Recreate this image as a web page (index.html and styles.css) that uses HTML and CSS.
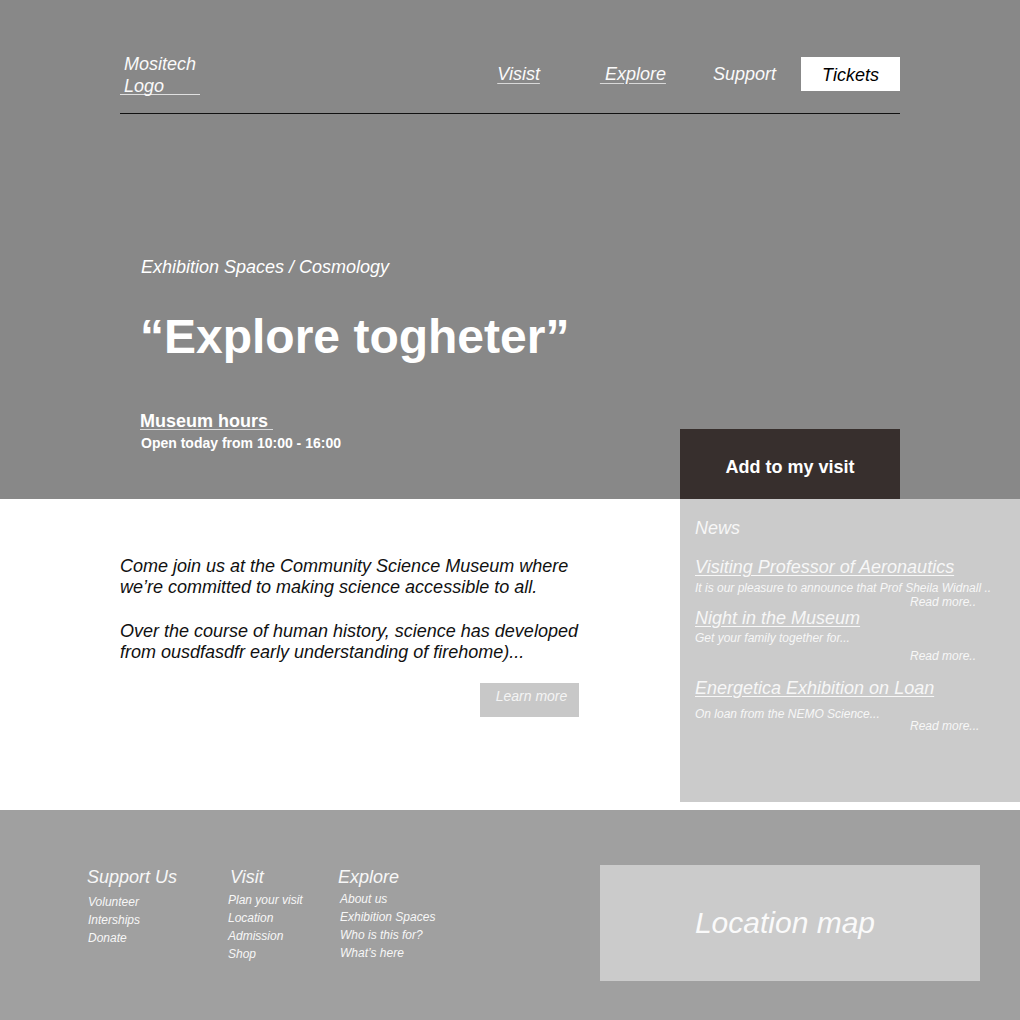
FILE: index.html
```html
<!DOCTYPE html>
<html lang="en">
<head>
<meta charset="utf-8">
<title>Mositech Museum</title>
<link rel="stylesheet" href="styles.css">
</head>
<body>
<section class="hero">
  <header class="topbar">
    <div class="logo">
      <div class="logo-line">Mositech</div>
      <div class="logo-line logo-under">Logo</div>
    </div>
    <nav class="nav">
      <a class="nav-link nav-visit">Visist</a>
      <a class="nav-link nav-explore">&nbsp;Explore</a>
      <a class="nav-link nav-support">Support</a>
      <a class="tickets">Tickets</a>
    </nav>
  </header>
  <div class="hero-body">
    <p class="crumb">Exhibition Spaces / Cosmology</p>
    <h1 class="title">“Explore togheter”</h1>
    <div class="hero-row">
      <div class="hours">
        <div class="hours-title">Museum hours&nbsp;</div>
        <div class="hours-text">Open today from 10:00 - 16:00</div>
      </div>
      <button class="add-visit">Add to my visit</button>
    </div>
  </div>
</section>

<main class="main">
  <div class="intro">
    <p class="intro-p">Come join us at the Community Science Museum where we’re committed to making science accessible to all.</p>
    <p class="intro-p">Over the course of human history, science has developed from ousdfasdfr early understanding of firehome)...</p>
    <div class="learn-row"><a class="learn-more">Learn more</a></div>
  </div>
  <aside class="news">
    <div class="news-head">News</div>
    <div class="news-item item-1">
      <a class="news-title">Visiting Professor of Aeronautics</a>
      <div class="news-desc">It is our pleasure to announce that Prof Sheila Widnall ..</div>
      <div class="news-more">Read more..</div>
    </div>
    <div class="news-item item-2">
      <a class="news-title">Night in the Museum</a>
      <div class="news-desc">Get your family together for...</div>
      <div class="news-more">Read more..</div>
    </div>
    <div class="news-item item-3">
      <a class="news-title">Energetica Exhibition on Loan</a>
      <div class="news-desc">On loan from the NEMO Science...</div>
      <div class="news-more">Read more...</div>
    </div>
  </aside>
</main>

<footer class="footer">
  <div class="fcol fcol-support">
    <div class="fhead">Support Us</div>
    <ul class="flist">
      <li>Volunteer</li>
      <li>Interships</li>
      <li>Donate</li>
    </ul>
  </div>
  <div class="fcol fcol-visit">
    <div class="fhead">Visit</div>
    <ul class="flist">
      <li>Plan your visit</li>
      <li>Location</li>
      <li>Admission</li>
      <li>Shop</li>
    </ul>
  </div>
  <div class="fcol fcol-explore">
    <div class="fhead">Explore</div>
    <ul class="flist">
      <li>About us</li>
      <li>Exhibition Spaces</li>
      <li>Who is this for?</li>
      <li>What’s here</li>
    </ul>
  </div>
  <div class="map">Location map</div>
</footer>
</body>
</html>
```
FILE: styles.css
```css
* { box-sizing: border-box; }

html, body {
  margin: 0;
  padding: 0;
}

body {
  width: 1020px;
  font-family: "Liberation Sans", Arial, sans-serif;
  background: #ffffff;
  color: #111;
}

p { margin: 0; }
ul { margin: 0; padding: 0; list-style: none; }

/* ---------- hero ---------- */
.hero {
  height: 499px;
  background: #888888;
  color: #ffffff;
  display: flex;
  flex-direction: column;
}

.topbar {
  margin: 0 120px;
  height: 114px;
  padding-top: 53px;
  border-bottom: 1px solid #111;
  display: flex;
  align-items: flex-start;
}

.logo {
  width: 80px;
  font-size: 18px;
  font-style: italic;
  color: #fafafa;
}

.logo-line {
  padding-left: 4px;
  line-height: 22px;
}

.logo-under {
  height: 20px;
  border-bottom: 1px solid #e0e0e0;
}

.nav {
  margin-left: auto;
  margin-top: 4px;
  display: flex;
  align-items: center;
}

.nav-link {
  font-size: 18px;
  font-style: italic;
  color: #fafafa;
  line-height: 32px;
  padding-bottom: 1px;
}

.nav-visit { text-decoration: underline; text-decoration-color: #d8d8d8; text-underline-offset: 3px; }
.nav-explore { margin-left: 60px; text-decoration: underline; text-decoration-color: #d8d8d8; text-underline-offset: 3px; }
.nav-support { margin-left: 47px; }

.tickets {
  margin-left: 25px;
  width: 99px;
  height: 34px;
  line-height: 36px;
  background: #ffffff;
  color: #000;
  font-size: 18px;
  font-style: italic;
  text-align: center;
}

.hero-body {
  margin: 0 120px;
  display: flex;
  flex-direction: column;
}

.crumb {
  margin-top: 142px;
  padding-left: 21px;
  font-size: 18px;
  font-style: italic;
  line-height: 22px;
}

.title {
  margin: 29px 0 0 0;
  padding-left: 20px;
  font-size: 48px;
  font-weight: bold;
  line-height: 60px;
}

.hero-row {
  margin-top: 43px;
  display: flex;
  align-items: flex-start;
  justify-content: space-between;
}

.hours {
  padding-left: 20px;
}

.hours-title {
  font-size: 18px;
  font-weight: bold;
  line-height: 22px;
  text-decoration: underline;
  text-underline-offset: 2px;
  text-decoration-color: #dcdcdc;
}

.hours-text {
  margin-top: 2px;
  padding-left: 1px;
  font-size: 14px;
  font-weight: bold;
  line-height: 18px;
}

.add-visit {
  margin-top: 19px;
  width: 220px;
  height: 70px;
  border: 0;
  background: #372f2d;
  color: #ffffff;
  font-family: "Liberation Sans", Arial, sans-serif;
  font-size: 18px;
  font-weight: bold;
  padding: 6px 0 0 0;
}

/* ---------- main ---------- */
.main {
  height: 311px;
  display: flex;
  align-items: flex-start;
}

.intro {
  margin-left: 120px;
  padding-top: 57px;
  width: 460px;
}

.intro-p {
  font-size: 18px;
  font-style: italic;
  line-height: 21px;
  color: #111;
}

.intro-p + .intro-p { margin-top: 23px; }

.learn-row {
  margin-top: 20px;
  display: flex;
  justify-content: flex-end;
  padding-right: 1px;
}

.learn-more {
  width: 99px;
  height: 34px;
  background: #c8c8c8;
  color: #f4f4f4;
  font-size: 14px;
  font-style: italic;
  line-height: 17px;
  padding: 5px 0 0 4px;
  text-align: center;
}

.news {
  margin-left: auto;
  width: 340px;
  height: 303px;
  background: #cbcbcb;
  color: #f7f7f7;
  padding: 18px 0 0 15px;
  font-style: italic;
}

.news-head {
  font-size: 18px;
  line-height: 22px;
}

.news-title {
  display: inline-block;
  font-size: 18px;
  line-height: 22px;
  text-decoration: underline;
  text-underline-offset: 2px;
}

.news-desc {
  font-size: 12px;
  line-height: 14px;
}

.news-more {
  padding-left: 215px;
  font-size: 12px;
  line-height: 14px;
}

.item-1 { margin-top: 17px; }
.item-1 .news-desc { margin-top: 3px; }
.item-2 { margin-top: -2px; }
.item-2 .news-desc { margin-top: 2px; }
.item-2 .news-more { margin-top: 4px; }
.item-3 { margin-top: 14px; }
.item-3 .news-desc { margin-top: 8px; }
.item-3 .news-more { margin-top: -2px; }

/* ---------- footer ---------- */
.footer {
  height: 210px;
  background: #a0a0a0;
  color: #f7f7f7;
  font-style: italic;
  display: flex;
  align-items: flex-start;
  padding: 55px 40px 0 87px;
}

.fcol { padding-top: 1px; }
.fcol-support { width: 141px; }
.fcol-visit { width: 110px; }
.fcol-explore { width: 150px; }

.fhead {
  font-size: 18px;
  line-height: 22px;
}

.flist {
  font-size: 12px;
  line-height: 18px;
}

.fcol-support .flist { margin-top: 5px; padding-left: 1px; }
.fcol-visit .fhead { padding-left: 2px; }
.fcol-visit .flist { margin-top: 3px; }
.fcol-explore .flist { margin-top: 2px; padding-left: 2px; }

.map {
  margin-left: auto;
  width: 380px;
  height: 116px;
  background: #cbcbcb;
  color: #fafafa;
  font-size: 30px;
  display: flex;
  align-items: center;
  justify-content: center;
  padding-right: 10px;
}
```
